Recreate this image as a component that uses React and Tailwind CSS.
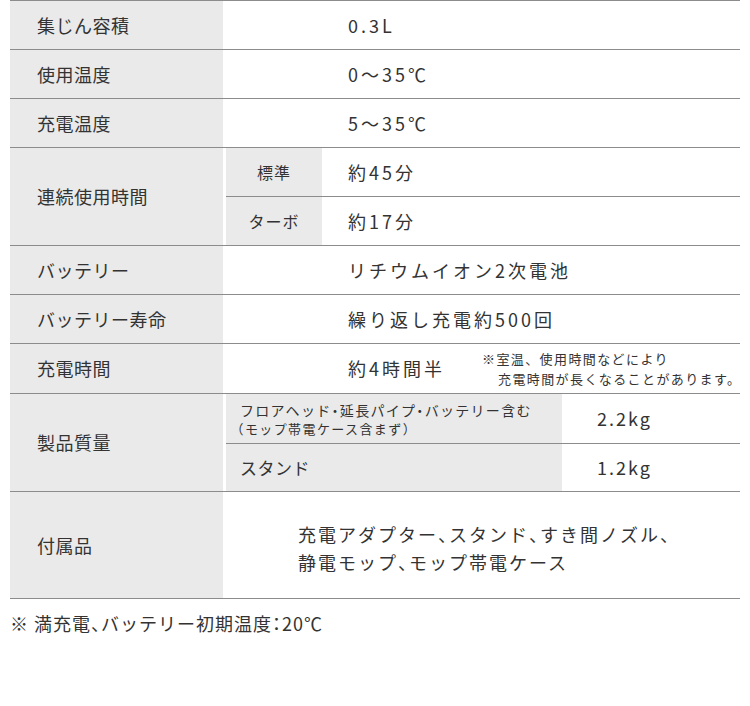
const font = { fontFamily: '"Noto Sans CJK JP", "Noto Sans", sans-serif' };

const line = "border-b border-[#8c8c8c]";

// punctuation in the reference is set half-width
function Tight({ text }) {
  return text.split(/([、・：（）])/).map((part, i) =>
    /^[、・：（）]$/.test(part) ? (
      <span key={i} className="[font-feature-settings:'halt']">{part}</span>
    ) : (
      part
    )
  );
}

function Label({ children }) {
  return (
    <div className="flex w-[213px] shrink-0 items-center bg-[#eaeaea] pl-[27px] text-[18px] tracking-[0.5px]">
      {children}
    </div>
  );
}

function SimpleRow({ label, value }) {
  return (
    <div className={`flex h-[49px] ${line}`}>
      <Label>{label}</Label>
      <div className="flex items-center pl-[125px] text-[18px] tracking-[3px]">{value}</div>
    </div>
  );
}

export default function App() {
  return (
    <div className="min-h-screen bg-white text-[#333333]" style={font}>
      <div className="ml-[10px] w-[730px] border-t border-[#8c8c8c]">
        <SimpleRow label="集じん容積" value="0.3L" />
        <SimpleRow label="使用温度" value="0〜35℃" />
        <SimpleRow label="充電温度" value="5〜35℃" />

        <div className={`flex h-[98px] ${line}`}>
          <Label>連続使用時間</Label>
          <div className="ml-[3px] flex flex-1 flex-col">
            <div className={`flex h-[49px] ${line}`}>
              <div className="flex w-[96px] items-center justify-center bg-[#eaeaea] text-[16px] tracking-[1px]">標準</div>
              <div className="flex items-center pl-[26px] text-[18px] tracking-[3px]">約45分</div>
            </div>
            <div className="flex flex-1">
              <div className="flex w-[96px] items-center justify-center bg-[#eaeaea] text-[16px] tracking-[1px]">ターボ</div>
              <div className="flex items-center pl-[26px] text-[18px] tracking-[3px]">約17分</div>
            </div>
          </div>
        </div>

        <SimpleRow label="バッテリー" value="リチウムイオン2次電池" />
        <SimpleRow label="バッテリー寿命" value="繰り返し充電約500回" />

        <div className={`flex h-[50px] ${line}`}>
          <Label>充電時間</Label>
          <div className="flex flex-1 items-center whitespace-nowrap pl-[125px]">
            <span className="shrink-0 text-[18px] tracking-[3px]">約4時間半</span>
            <div className="ml-[37px] shrink-0 text-[13px] leading-[20px] tracking-[1.4px]">
              <p>※室温、使用時間などにより</p>
              <p className="pl-[16px]">充電時間が長くなることがあります。</p>
            </div>
          </div>
        </div>

        <div className={`flex h-[98px] ${line}`}>
          <Label>製品質量</Label>
          <div className="ml-[3px] flex flex-1 flex-col">
            <div className={`flex h-[50px] ${line}`}>
              <div className="flex w-[336px] flex-col justify-center whitespace-nowrap bg-[#eaeaea] pl-[14px]">
                <p className="text-[14px] leading-[20px] tracking-[1.3px]">
                  <Tight text="フロアヘッド・延長パイプ・バッテリー含む" />
                </p>
                <p className="-ml-[3px] text-[13px] leading-[18px] tracking-[1.4px]">
                  <Tight text="（モップ帯電ケース含まず）" />
                </p>
              </div>
              <div className="flex items-center pl-[35px] text-[18px] tracking-[2px]">2.2kg</div>
            </div>
            <div className="flex flex-1">
              <div className="flex w-[336px] items-center bg-[#eaeaea] pl-[14px] text-[17px] tracking-[0.5px]">スタンド</div>
              <div className="flex items-center pl-[35px] text-[18px] tracking-[2px]">1.2kg</div>
            </div>
          </div>
        </div>

        <div className={`flex h-[107px] ${line}`}>
          <Label>付属品</Label>
          <div className="flex flex-col justify-center pl-[75px] pt-[6px] text-[18px] leading-[28px] tracking-[2px]">
            <p><Tight text="充電アダプター、スタンド、すき間ノズル、" /></p>
            <p><Tight text="静電モップ、モップ帯電ケース" /></p>
          </div>
        </div>
      </div>

      <p className="ml-[10px] mt-[12px] text-[18px] leading-[24px] tracking-[1px]">
        <Tight text="※ 満充電、バッテリー初期温度：20℃" />
      </p>
    </div>
  );
}
